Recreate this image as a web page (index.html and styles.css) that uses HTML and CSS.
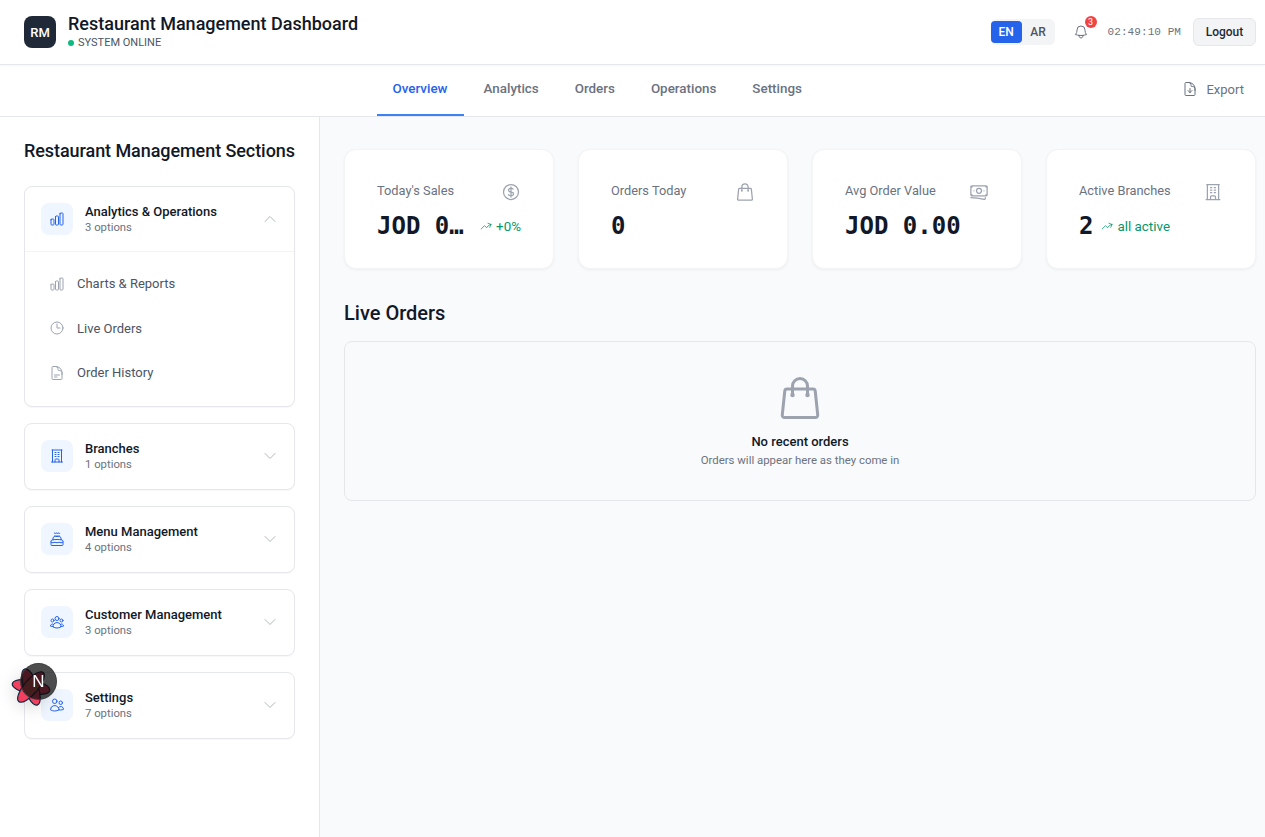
FILE: index.html
```html
<!DOCTYPE html>
<html lang="en">
<head>
<meta charset="utf-8">
<title>Restaurant Management Dashboard</title>
<link rel="stylesheet" href="styles.css">
</head>
<body>
<svg class="sprite" aria-hidden="true">
  <symbol id="i-chart" viewBox="0 0 24 24"><path d="M3 13.125C3 12.504 3.504 12 4.125 12h2.25c.621 0 1.125.504 1.125 1.125v6.75C7.5 20.496 6.996 21 6.375 21h-2.25A1.125 1.125 0 0 1 3 19.875v-6.75ZM9.75 8.625c0-.621.504-1.125 1.125-1.125h2.25c.621 0 1.125.504 1.125 1.125v11.25c0 .621-.504 1.125-1.125 1.125h-2.25a1.125 1.125 0 0 1-1.125-1.125V8.625ZM16.5 4.125c0-.621.504-1.125 1.125-1.125h2.25C20.496 3 21 3.504 21 4.125v15.75c0 .621-.504 1.125-1.125 1.125h-2.25a1.125 1.125 0 0 1-1.125-1.125V4.125Z"/></symbol>
  <symbol id="i-clock" viewBox="0 0 24 24"><path d="M12 6v6h4.5m4.5 0a9 9 0 1 1-18 0 9 9 0 0 1 18 0Z"/></symbol>
  <symbol id="i-doc" viewBox="0 0 24 24"><path d="M19.5 14.25v-2.625a3.375 3.375 0 0 0-3.375-3.375h-1.5A1.125 1.125 0 0 1 13.5 7.125v-1.5a3.375 3.375 0 0 0-3.375-3.375H8.25m0 12.75h7.5m-7.5 3H12M10.5 2.25H5.625c-.621 0-1.125.504-1.125 1.125v17.25c0 .621.504 1.125 1.125 1.125h12.75c.621 0 1.125-.504 1.125-1.125V11.25a9 9 0 0 0-9-9Z"/></symbol>
  <symbol id="i-building" viewBox="0 0 24 24"><path d="M3.75 21h16.5M4.5 3h15M5.25 3v18m13.5-18v18M9 6.75h1.5m-1.5 3h1.5m-1.5 3h1.5m3-6H15m-1.5 3H15m-1.5 3H15M9 21v-3.375c0-.621.504-1.125 1.125-1.125h3.75c.621 0 1.125.504 1.125 1.125V21"/></symbol>
  <symbol id="i-cake" viewBox="0 0 24 24"><path d="M12 8.25v-1.5m0 1.5c-1.355 0-2.697.056-4.024.166C6.845 8.51 6 9.473 6 10.608v2.513m6-4.871c1.354 0 2.697.056 4.024.166C17.155 8.51 18 9.473 18 10.608v2.513M15 8.25v-1.5m-6 1.5v-1.5m12 9.75-1.5.75a3.354 3.354 0 0 1-3 0 3.354 3.354 0 0 0-3 0 3.354 3.354 0 0 1-3 0 3.354 3.354 0 0 0-3 0 3.354 3.354 0 0 1-3 0L3 16.5m15-3.379a48.474 48.474 0 0 0-6-.371c-2.032 0-4.034.126-6 .371m12 0c.39.049.777.102 1.163.16 1.07.16 1.837 1.094 1.837 2.175v5.169c0 .621-.504 1.125-1.125 1.125H4.125A1.125 1.125 0 0 1 3 20.625v-5.17c0-1.08.768-2.014 1.837-2.174A47.78 47.78 0 0 1 6 13.12M12.265 3.11a.375.375 0 1 1-.53 0L12 2.845l.265.265Zm-3 0a.375.375 0 1 1-.53 0L9 2.845l.265.265Zm6 0a.375.375 0 1 1-.53 0L15 2.845l.265.265Z"/></symbol>
  <symbol id="i-group" viewBox="0 0 24 24"><path d="M18 18.72a9.094 9.094 0 0 0 3.741-.479 3 3 0 0 0-4.682-2.72m.94 3.198.001.031c0 .225-.012.447-.037.666A11.944 11.944 0 0 1 12 21c-2.17 0-4.207-.576-5.963-1.584A6.062 6.062 0 0 1 6 18.719m12 0a5.971 5.971 0 0 0-.941-3.197m0 0A5.995 5.995 0 0 0 12 12.75a5.995 5.995 0 0 0-5.058 2.772m0 0a3 3 0 0 0-4.681 2.72 8.986 8.986 0 0 0 3.74.477m.94-3.197a5.971 5.971 0 0 0-.94 3.197M15 6.75a3 3 0 1 1-6 0 3 3 0 0 1 6 0Zm6 3a2.25 2.25 0 1 1-4.5 0 2.25 2.25 0 0 1 4.5 0Zm-13.5 0a2.25 2.25 0 1 1-4.5 0 2.25 2.25 0 0 1 4.5 0Z"/></symbol>
  <symbol id="i-users" viewBox="0 0 24 24"><path d="M15 19.128a9.38 9.38 0 0 0 2.625.372 9.337 9.337 0 0 0 4.121-.952 4.125 4.125 0 0 0-7.533-2.493M15 19.128v-.003c0-1.113-.285-2.16-.786-3.07M15 19.128v.106A12.318 12.318 0 0 1 8.624 21c-2.331 0-4.512-.645-6.374-1.766l-.001-.109a6.375 6.375 0 0 1 11.964-3.07M12 6.375a3.375 3.375 0 1 1-6.75 0 3.375 3.375 0 0 1 6.75 0Zm8.25 2.25a2.625 2.625 0 1 1-5.25 0 2.625 2.625 0 0 1 5.25 0Z"/></symbol>
  <symbol id="i-bell" viewBox="0 0 24 24"><path d="M14.857 17.082a23.848 23.848 0 0 0 5.454-1.31A8.967 8.967 0 0 1 18 9.75V9A6 6 0 0 0 6 9v.75a8.967 8.967 0 0 1-2.312 6.022c1.733.64 3.56 1.085 5.455 1.31m5.714 0a24.255 24.255 0 0 1-5.714 0m5.714 0a3 3 0 1 1-5.714 0"/></symbol>
  <symbol id="i-export" viewBox="0 0 24 24"><path d="M19.5 14.25v-2.625a3.375 3.375 0 0 0-3.375-3.375h-1.5A1.125 1.125 0 0 1 13.5 7.125v-1.5a3.375 3.375 0 0 0-3.375-3.375H8.25m.75 12 3 3m0 0 3-3m-3 3v-6m-1.5-9H5.625c-.621 0-1.125.504-1.125 1.125v17.25c0 .621.504 1.125 1.125 1.125h12.75c.621 0 1.125-.504 1.125-1.125V11.25a9 9 0 0 0-9-9Z"/></symbol>
  <symbol id="i-bag" viewBox="0 0 24 24"><path d="M15.75 10.5V6a3.75 3.75 0 1 0-7.5 0v4.5m11.356-1.993 1.263 12c.07.665-.45 1.243-1.119 1.243H4.25a1.125 1.125 0 0 1-1.12-1.243l1.264-12A1.125 1.125 0 0 1 5.513 7.5h12.974c.576 0 1.059.435 1.119 1.007ZM8.625 10.5a.375.375 0 1 1-.75 0 .375.375 0 0 1 .75 0Zm7.5 0a.375.375 0 1 1-.75 0 .375.375 0 0 1 .75 0Z"/></symbol>
  <symbol id="i-dollar" viewBox="0 0 24 24"><path d="M12 6v12m-3-2.818.879.659c1.171.879 3.07.879 4.242 0 1.172-.879 1.172-2.303 0-3.182C13.536 12.219 12.768 12 12 12c-.725 0-1.45-.22-2.003-.659-1.106-.879-1.106-2.303 0-3.182s2.9-.879 4.006 0l.415.33M21 12a9 9 0 1 1-18 0 9 9 0 0 1 18 0Z"/></symbol>
  <symbol id="i-cash" viewBox="0 0 24 24"><path d="M2.25 18.75a60.07 60.07 0 0 1 15.797 2.101c.727.198 1.453-.342 1.453-1.096V18.75M3.75 4.5v.75A.75.75 0 0 1 3 6h-.75m0 0v-.375c0-.621.504-1.125 1.125-1.125H20.25M2.25 6v9m18-10.5v.75c0 .414.336.75.75.75h.75m-1.5-1.5h.375c.621 0 1.125.504 1.125 1.125v9.75c0 .621-.504 1.125-1.125 1.125h-.375m1.5-1.5H21a.75.75 0 0 0-.75.75v.75m0 0H3.75m0 0h-.375a1.125 1.125 0 0 1-1.125-1.125V15m1.5 1.5v-.75A.75.75 0 0 0 3 15h-.75M15 10.5a3 3 0 1 1-6 0 3 3 0 0 1 6 0Zm3 0h.008v.008H18V10.5Zm-12 0h.008v.008H6V10.5Z"/></symbol>
  <symbol id="i-trend" viewBox="0 0 24 24"><path d="M2.25 18 9 11.25l4.306 4.306a11.95 11.95 0 0 1 5.814-5.518l2.74-1.22m0 0-5.94-2.281m5.94 2.28-2.28 5.941"/></symbol>
  <symbol id="i-down" viewBox="0 0 24 24"><path d="m19.5 8.25-7.5 7.5-7.5-7.5"/></symbol>
  <symbol id="i-up" viewBox="0 0 24 24"><path d="m4.5 15.75 7.5-7.5 7.5 7.5"/></symbol>
</svg>

<header class="topbar">
  <div class="brand">
    <div class="logo">RM</div>
    <div class="brand-text">
      <h1 class="brand-title">Restaurant Management Dashboard</h1>
      <div class="status"><span class="status-dot"></span>SYSTEM ONLINE</div>
    </div>
  </div>
  <div class="top-actions">
    <div class="lang">
      <button class="lang-btn lang-active">EN</button>
      <button class="lang-btn">AR</button>
    </div>
    <div class="bell">
      <svg class="ic bell-ic"><use href="#i-bell"/></svg>
      <span class="badge">3</span>
    </div>
    <span class="clock">02:49:10 PM</span>
    <button class="logout">Logout</button>
  </div>
</header>

<nav class="navbar">
  <div class="tabs">
    <a class="tab tab-active">Overview</a>
    <a class="tab">Analytics</a>
    <a class="tab">Orders</a>
    <a class="tab">Operations</a>
    <a class="tab">Settings</a>
  </div>
  <button class="export"><svg class="ic export-ic"><use href="#i-export"/></svg>Export</button>
</nav>

<div class="body-row">
  <aside class="sidebar">
    <h2 class="side-title">Restaurant Management Sections</h2>
    <div class="acc-list">
      <section class="acc acc-open">
        <div class="acc-head acc-head-open">
          <span class="acc-icon"><svg class="ic blue"><use href="#i-chart"/></svg></span>
          <span class="acc-text"><span class="acc-name">Analytics &amp; Operations</span><span class="acc-sub">3 options</span></span>
          <svg class="ic chev"><use href="#i-up"/></svg>
        </div>
        <ul class="acc-items">
          <li class="acc-item"><svg class="ic item-ic"><use href="#i-chart"/></svg>Charts &amp; Reports</li>
          <li class="acc-item"><svg class="ic item-ic"><use href="#i-clock"/></svg>Live Orders</li>
          <li class="acc-item"><svg class="ic item-ic"><use href="#i-doc"/></svg>Order History</li>
        </ul>
      </section>
      <section class="acc">
        <div class="acc-head">
          <span class="acc-icon"><svg class="ic blue"><use href="#i-building"/></svg></span>
          <span class="acc-text"><span class="acc-name">Branches</span><span class="acc-sub">1 options</span></span>
          <svg class="ic chev"><use href="#i-down"/></svg>
        </div>
      </section>
      <section class="acc">
        <div class="acc-head">
          <span class="acc-icon"><svg class="ic blue"><use href="#i-cake"/></svg></span>
          <span class="acc-text"><span class="acc-name">Menu Management</span><span class="acc-sub">4 options</span></span>
          <svg class="ic chev"><use href="#i-down"/></svg>
        </div>
      </section>
      <section class="acc">
        <div class="acc-head">
          <span class="acc-icon"><svg class="ic blue"><use href="#i-group"/></svg></span>
          <span class="acc-text"><span class="acc-name">Customer Management</span><span class="acc-sub">3 options</span></span>
          <svg class="ic chev"><use href="#i-down"/></svg>
        </div>
      </section>
      <section class="acc">
        <div class="acc-head">
          <span class="acc-icon"><svg class="ic blue"><use href="#i-users"/></svg></span>
          <span class="acc-text"><span class="acc-name">Settings</span><span class="acc-sub">7 options</span></span>
          <svg class="ic chev"><use href="#i-down"/></svg>
        </div>
      </section>
    </div>
  </aside>

  <main class="main">
    <div class="stats">
      <article class="stat">
        <div class="stat-top"><span class="stat-label">Today's Sales</span><svg class="ic stat-ic"><use href="#i-dollar"/></svg></div>
        <div class="stat-bottom"><span class="stat-value">JOD 0.00</span><span class="trend"><svg class="ic trend-ic"><use href="#i-trend"/></svg>+0%</span></div>
      </article>
      <article class="stat">
        <div class="stat-top"><span class="stat-label">Orders Today</span><svg class="ic stat-ic"><use href="#i-bag"/></svg></div>
        <div class="stat-bottom"><span class="stat-value">0</span></div>
      </article>
      <article class="stat">
        <div class="stat-top"><span class="stat-label">Avg Order Value</span><svg class="ic stat-ic"><use href="#i-cash"/></svg></div>
        <div class="stat-bottom"><span class="stat-value">JOD 0.00</span></div>
      </article>
      <article class="stat">
        <div class="stat-top"><span class="stat-label">Active Branches</span><svg class="ic stat-ic"><use href="#i-building"/></svg></div>
        <div class="stat-bottom"><span class="stat-value">2</span><span class="trend"><svg class="ic trend-ic"><use href="#i-trend"/></svg>all active</span></div>
      </article>
    </div>
    <h2 class="live-title">Live Orders</h2>
    <div class="empty">
      <svg class="ic empty-ic"><use href="#i-bag"/></svg>
      <div class="empty-title">No recent orders</div>
      <div class="empty-sub">Orders will appear here as they come in</div>
    </div>
  </main>
</div>

<div class="devtools" aria-hidden="true">
  <svg class="dev-atom" viewBox="0 0 40 40">
    <g fill="#f43f5e" stroke="#12263f" stroke-width="1.2">
      <ellipse cx="20" cy="20" rx="19" ry="7" transform="rotate(10 20 20)"/>
      <ellipse cx="20" cy="20" rx="19" ry="7" transform="rotate(70 20 20)"/>
      <ellipse cx="20" cy="20" rx="19" ry="7" transform="rotate(130 20 20)"/>
    </g>
    <path class="dev-hex" d="M20 13.5 25.6 16.7v6.6L20 26.5 14.4 23.3v-6.6Z M20 16.5 23 18.2v3.6L20 23.5 17 21.8v-3.6Z"/>
  </svg>
  <div class="dev-circle"><span class="dev-n">N</span></div>
</div>
</body>
</html>
```

FILE: styles.css
```css
* { box-sizing: border-box; }
html, body { margin: 0; height: 100%; }
body {
  font-family: Roboto, "Noto Sans", sans-serif;
  color: #111827;
  background: #fff;
  display: flex;
  flex-direction: column;
  min-height: 837px;
  overflow: hidden;
}
.sprite { display: none; }
.ic { fill: none; stroke: currentColor; stroke-width: 1.5; stroke-linecap: round; stroke-linejoin: round; flex: none; }
button { font-family: inherit; border: 0; background: none; padding: 0; }
h1, h2, ul { margin: 0; padding: 0; }

.topbar {
  height: 65px;
  flex: none;
  display: flex;
  align-items: center;
  justify-content: space-between;
  padding: 0 9px 0 24px;
  border-bottom: 1px solid #e5e7eb;
  box-shadow: 0 1px 2px rgba(0,0,0,.04);
}
.brand { display: flex; align-items: center; gap: 12px; }
.logo {
  width: 32px; height: 32px; border-radius: 8px;
  background: #1f2937; color: #fff;
  display: flex; align-items: center; justify-content: center;
  font-size: 13px; font-weight: 500;
}
.brand-text { padding-bottom: 3px; }
.brand-title { font-size: 18px; line-height: 24px; font-weight: 500; white-space: nowrap; }
.status { display: flex; align-items: center; gap: 4px; font-size: 11px; line-height: 12px; color: #4b5563; margin-top: 1px; }
.status-dot { width: 6px; height: 6px; border-radius: 50%; background: #10b981; }

.top-actions { display: flex; align-items: center; }
.lang { display: flex; padding: 2px 0; background: #f3f4f6; border-radius: 6px; margin-right: 19px; width: 64px; }
.lang-btn { width: 33px; height: 22px; font-size: 12px; font-weight: 500; color: #4b5563; border-radius: 4px; }
.lang-active { width: 31px; background: #2563eb; color: #fff; }
.bell { position: relative; width: 16px; height: 16px; margin-right: 18px; color: #6b7280; left: -1px; }
.bell-ic { width: 16px; height: 16px; display: block; }
.badge {
  position: absolute; top: -8px; left: 12px;
  width: 12px; height: 12px; border-radius: 50%;
  background: #ef4444; color: #fff;
  font-size: 9px; line-height: 12px; text-align: center;
}
.clock { font-family: "Liberation Mono", monospace; font-size: 11px; color: #6b7280; margin-right: 12px; letter-spacing: .07px; }
.logout {
  width: 63px; height: 28px; line-height: 24px; padding-bottom: 1px;
  background: #f3f4f6; border: 1px solid #e5e7eb; border-radius: 6px;
  font-size: 12px; font-weight: 500; color: #1f2937;
}

.navbar {
  height: 52px; flex: none;
  display: flex; align-items: stretch;
  padding: 0 9px 0 24px;
  border-bottom: 1px solid #e5e7eb;
}
.tabs { flex: 1; display: flex; justify-content: center; gap: 4px; }
.tab {
  padding: 0 16px 2px; display: flex; align-items: center;
  font-size: 13.4px; font-weight: 500; color: #6b7280;
  border-bottom: 2px solid transparent;
}
.tab-active { color: #2563eb; border-bottom-color: #3b82f6; }
.export {
  display: flex; align-items: center; gap: 8px;
  padding: 0 12px 3px; font-size: 13px; color: #6b7280;
}
.export-ic { width: 16px; height: 16px; }

.body-row { flex: 1; display: flex; min-height: 0; }
.sidebar {
  width: 320px; flex: none;
  padding: 24px 24px 0;
  border-right: 1px solid #e5e7eb;
}
.side-title { font-size: 18px; line-height: 20px; font-weight: 500; letter-spacing: -.07px; margin-bottom: 25px; white-space: nowrap; }
.acc-list { display: flex; flex-direction: column; gap: 16px; }
.acc {
  border: 1px solid #e5e7eb; border-radius: 8px;
  box-shadow: 0 1px 1px rgba(0,0,0,.03);
  background: #fff;
  width: 271px;
}
.acc-head { display: flex; align-items: center; height: 65.1px; padding: 0 16px; }
.acc-head-open { border-bottom: 1px solid #f3f4f6; }
.acc-icon {
  width: 32px; height: 32px; border-radius: 8px;
  background: #eff6ff;
  display: flex; align-items: center; justify-content: center;
  margin-right: 12px;
}
.blue { width: 16px; height: 16px; color: #2563eb; }
.acc-text { flex: 1; display: flex; flex-direction: column; min-width: 0; padding-top: 1px; }
.acc-name { font-size: 13px; line-height: 16px; font-weight: 500; color: #111827; white-space: nowrap; }
.acc-sub { font-size: 11.3px; line-height: 14px; color: #6b7280; margin-top: 1px; }
.chev { width: 16px; height: 16px; color: #9ca3af; stroke-width: 1.2; }
.acc-items { list-style: none; padding: 9.5px 16px 10.5px; }
.acc-item {
  height: 44.5px; display: flex; align-items: center; gap: 12px;
  padding-left: 8px;
  font-size: 13px; color: #4b5563;
}
.item-ic { width: 16px; height: 16px; color: #9ca3af; }

.main { flex: 1; min-width: 0; background: #f9fafb; padding: 32px 9px 0 24px; }
.stats { display: grid; grid-template-columns: repeat(4, 1fr); gap: 24px; }
.stat {
  height: 120px; padding: 32px;
  background: #fff; border: 1px solid #f3f4f6; border-radius: 12px;
  box-shadow: 0 1px 3px rgba(0,0,0,.05);
  min-width: 0;
}
.stat-top { display: flex; justify-content: space-between; align-items: flex-start; height: 22px; }
.stat-label { font-size: 12.8px; line-height: 18px; color: #6b7280; }
.stat-ic { width: 20px; height: 20px; color: #9ca3af; }
.stat-bottom { display: flex; align-items: center; gap: 8px; margin-top: 6px; }
.stat-value {
  font-family: "DejaVu Sans Mono", monospace;
  font-size: 24px; line-height: 32px; font-weight: 700; color: #111827;
  min-width: 0; overflow: hidden; text-overflow: ellipsis; white-space: nowrap;
  flex: 0 1 auto;
}
.trend { flex: none; display: flex; align-items: center; gap: 4px; font-size: 13.4px; color: #059669; }
.trend-ic { width: 12px; height: 12px; }

.live-title { font-size: 20px; line-height: 28px; font-weight: 500; margin: 30px 0 14px; }
.empty {
  height: 160px;
  border: 1px solid #e5e7eb; border-radius: 8px;
  display: flex; flex-direction: column; align-items: center;
  padding-top: 32px;
}
.empty-ic { width: 48px; height: 48px; color: #9ca3af; }
.empty-title { font-size: 13px; line-height: 18px; font-weight: 500; margin-top: 11px; }
.empty-sub { font-size: 11.4px; line-height: 16px; color: #6b7280; margin-top: 1px; }

.devtools { position: fixed; left: 8px; top: 660px; width: 52px; height: 52px; }
.dev-atom { position: absolute; left: 3px; top: 7px; width: 40px; height: 40px; filter: drop-shadow(0 4px 8px rgba(0,0,0,.15)); }
.dev-hex { fill: none; stroke: #8a8a22; stroke-width: .8; }
.dev-circle {
  position: absolute; left: 12px; top: 3px;
  width: 37px; height: 37px; border-radius: 50%;
  background: rgba(10,10,10,.72);
  border: 1px solid rgba(60,60,60,.9);
  display: flex; align-items: center; justify-content: center;
}
.dev-n { font-family: "Liberation Sans", sans-serif; font-size: 17px; color: #fff; line-height: 1; }
```
